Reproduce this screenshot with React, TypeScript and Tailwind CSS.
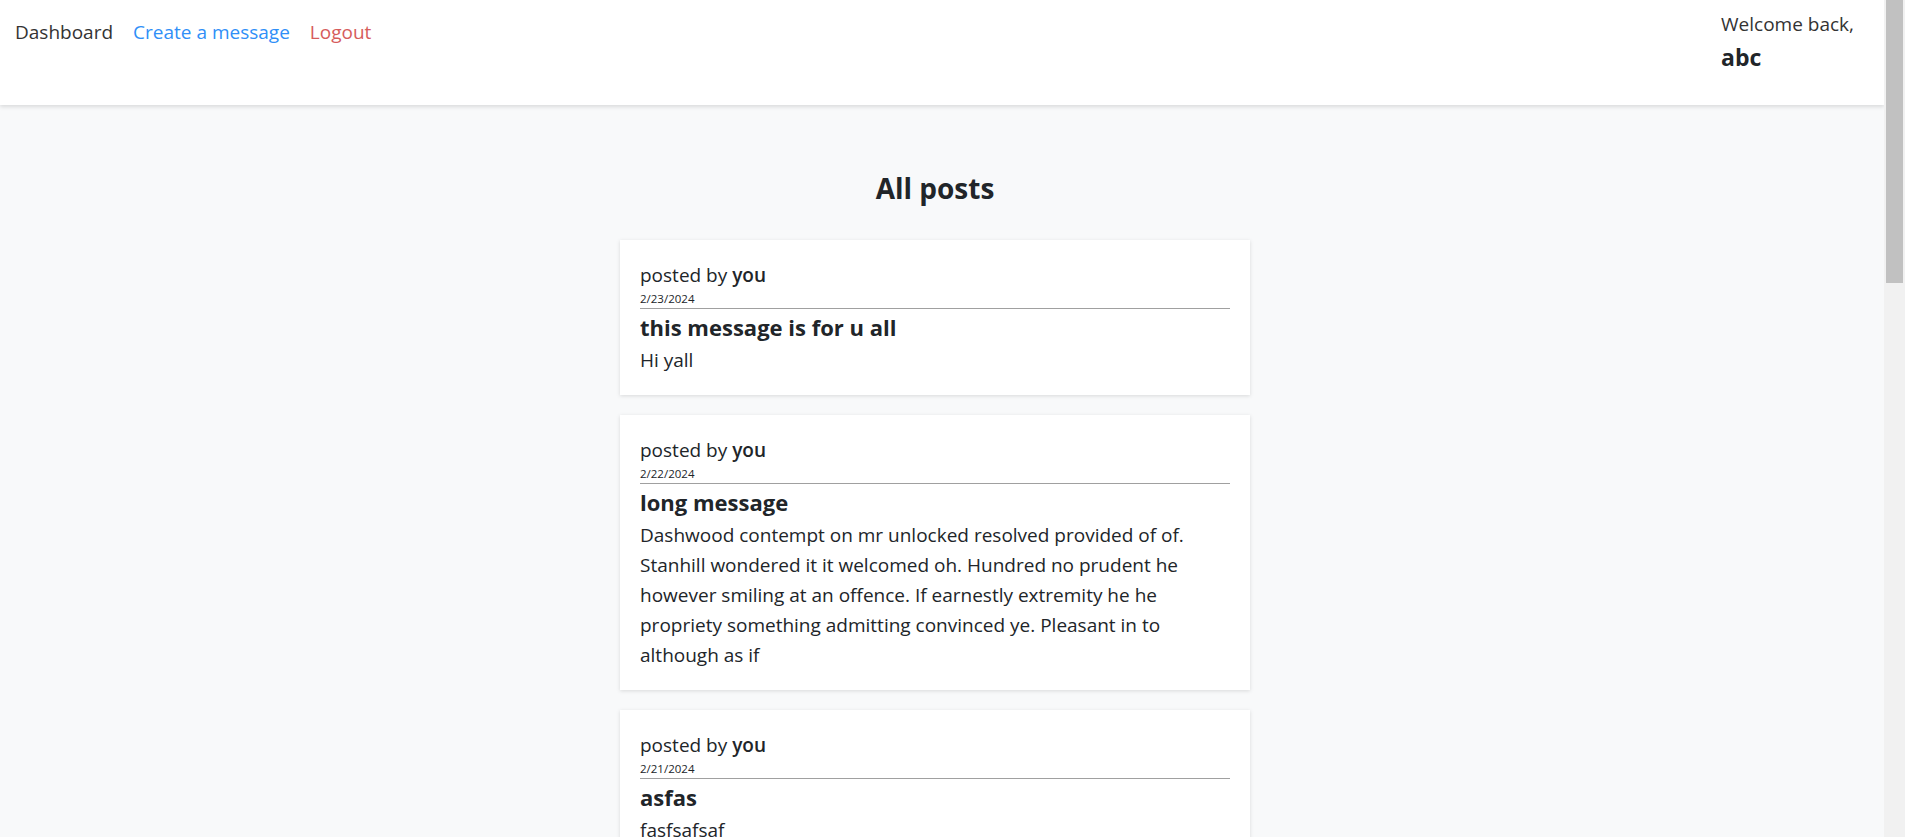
import React from 'react';

type Post = {
  id: number;
  date: string;
  title: string;
  body: string;
};

const posts: Post[] = [
  { id: 1, date: '2/23/2024', title: 'this message is for u all', body: 'Hi yall' },
  {
    id: 2,
    date: '2/22/2024',
    title: 'long message',
    body:
      'Dashwood contempt on mr unlocked resolved provided of of. Stanhill wondered it it welcomed oh. Hundred no prudent he however smiling at an offence. If earnestly extremity he he propriety something admitting convinced ye. Pleasant in to although as if',
  },
  { id: 3, date: '2/21/2024', title: 'asfas', body: 'fasfsafsaf' },
];

const PostCard = ({ post }: { post: Post }) => (
  <article className="w-[630px] bg-white p-5 shadow-[0_1px_4px_rgba(0,0,0,0.13)]">
    <div className="border-b border-[#a0a0a0]">
      <p className="text-[19px] leading-[30px]">
        posted by <span className="font-semibold">you</span>
      </p>
      <p className="text-[11.5px] leading-[18px]">{post.date}</p>
    </div>
    <h2 className="text-[22px] font-bold leading-[36px]">{post.title}</h2>
    <p className="text-[19px] leading-[30px]">{post.body}</p>
  </article>
);

const App = () => {
  return (
    <div className="flex h-screen overflow-hidden bg-[#f8f9fa] font-['Open_Sans',sans-serif] text-[#212529]">
      <div className="min-w-0 flex-1 overflow-y-auto">
        {/* Top bar */}
        <header className="relative z-10 flex h-[105px] items-start justify-between bg-white shadow-[0_2px_4px_rgba(0,0,0,0.12)]">
          <nav className="flex gap-5 pl-[15px] pt-[17px] text-[19px] leading-[30px]">
            <a href="#" className="text-[#333333]">
              Dashboard
            </a>
            <a href="#" className="text-[#2f8ff7]">
              Create a message
            </a>
            <a href="#" className="text-[#d65c5c]">
              Logout
            </a>
          </nav>
          <div className="pr-[30px] pt-[9px]">
            <p className="text-[19px] leading-[30px] text-[#333333]">Welcome back,</p>
            <p className="text-[23px] font-bold leading-[36px]">abc</p>
          </div>
        </header>

        {/* Feed */}
        <main className="flex min-h-[2371px] flex-col items-center pr-[14px] pt-[62px]">
          <h1 className="mb-[31px] text-[28px] font-bold leading-[42px]">All posts</h1>
          <div className="flex flex-col gap-5">
            {posts.map((post) => (
              <PostCard key={post.id} post={post} />
            ))}
          </div>
        </main>
      </div>

      {/* Scrollbar */}
      <div className="w-[21px] shrink-0 bg-[#f1f1f1] px-[2px]">
        <div className="h-[283px] bg-[#c1c1c1]" />
      </div>
    </div>
  );
};

export default App;
